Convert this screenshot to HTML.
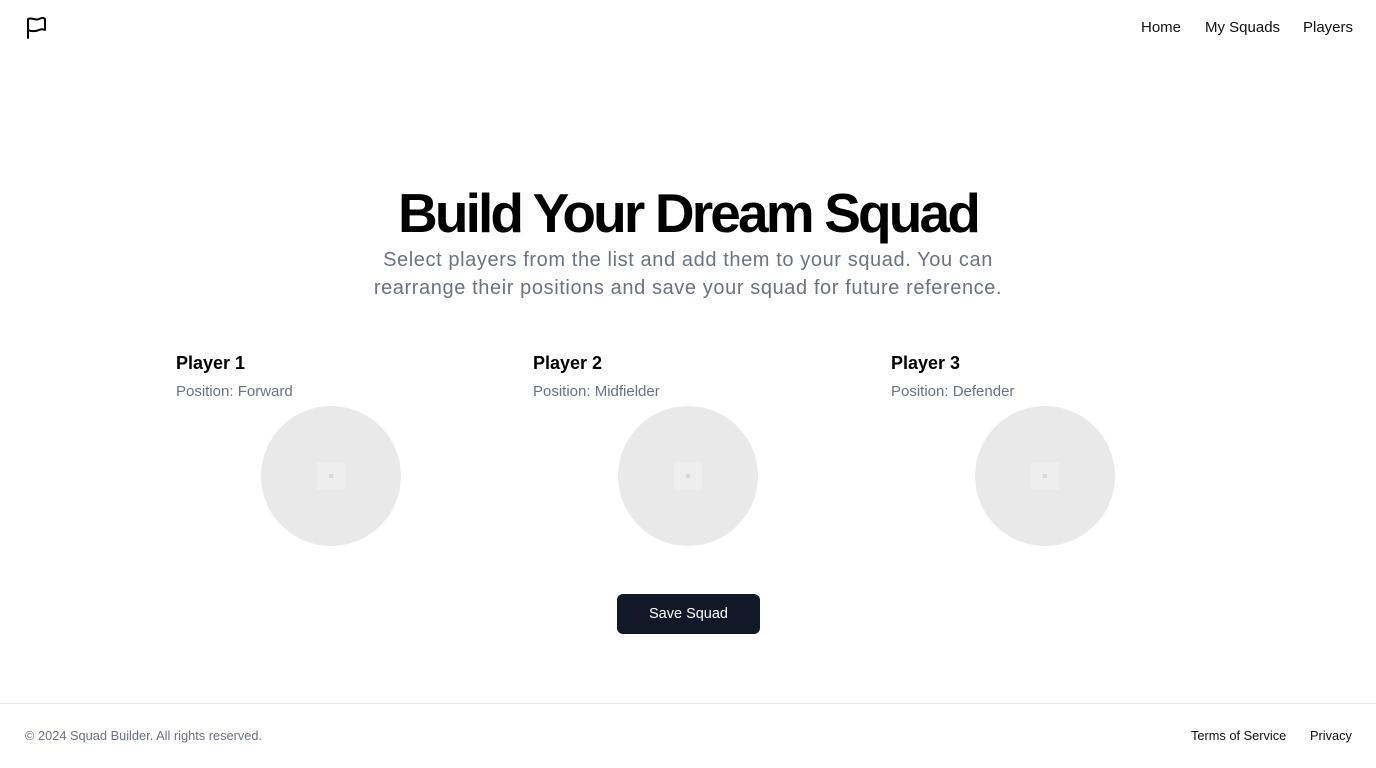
<!DOCTYPE html>
<html><head><style>
*{margin:0;padding:0;box-sizing:border-box}
body{width:1376px;height:768px;background:#fff;font-family:"Liberation Sans",Arial,sans-serif;position:relative;overflow:hidden;color:#000}
.nav a{position:absolute;top:19px;font-size:15px;color:#111;text-decoration:none}
h1{position:absolute;top:181px;left:0;width:1376px;text-align:center;font-size:55px;font-weight:700;letter-spacing:-2.85px}
.sub{position:absolute;top:246px;left:0;width:1376px;text-align:center;font-size:20px;line-height:28px;color:#6b7280;letter-spacing:0.6px}
.card{position:absolute;top:353px}
.card h3{font-size:18px;font-weight:700;margin-bottom:9px}
.card p{font-size:15px;color:#6b7280}
.circ{position:absolute;top:406px;width:140px;height:140px;border-radius:50%;background:#e9e9e9}
.circ::after{content:"";position:absolute;left:68px;top:68px;width:4px;height:4px;background:#d9d9d9;box-shadow:0 0 0 12px #eeeeee}
.btn{position:absolute;left:617px;top:594px;width:143px;height:40px;background:#111827;color:#fff;border-radius:6px;font-size:14.5px;text-align:center;line-height:40px}
.foot{position:absolute;top:703px;left:0;width:1376px;border-top:1px solid #e5e7eb}
.ft{position:absolute;top:728px;font-size:12.8px}
</style></head><body>
<svg style="position:absolute;left:26px;top:16px" width="22" height="24" viewBox="0 0 22 24" fill="none" stroke="#000" stroke-width="2" stroke-linejoin="round" stroke-linecap="round"><path d="M2 22V3c4-2 7 2 11 0s5-1 6 0v11c-2-1-4-1-6 0s-7 2-11 0"/></svg>
<div class="nav"><a style="left:1141px">Home</a><a style="left:1205px">My Squads</a><a style="left:1303px">Players</a></div>
<h1>Build Your Dream Squad</h1>
<div class="sub">Select players from the list and add them to your squad. You can<br>rearrange their positions and save your squad for future reference.</div>
<div class="card" style="left:176px"><h3>Player 1</h3><p>Position: Forward</p></div>
<div class="card" style="left:533px"><h3>Player 2</h3><p>Position: Midfielder</p></div>
<div class="card" style="left:891px"><h3>Player 3</h3><p>Position: Defender</p></div>
<div class="circ" style="left:261px"></div>
<div class="circ" style="left:618px"></div>
<div class="circ" style="left:975px"></div>
<div class="btn">Save Squad</div>
<div class="foot"></div>
<div class="ft" style="left:25px;color:#6b7280">© 2024 Squad Builder. All rights reserved.</div>
<div class="ft" style="left:1191px;color:#111">Terms of Service</div>
<div class="ft" style="left:1310px;color:#111">Privacy</div>
</body></html>
